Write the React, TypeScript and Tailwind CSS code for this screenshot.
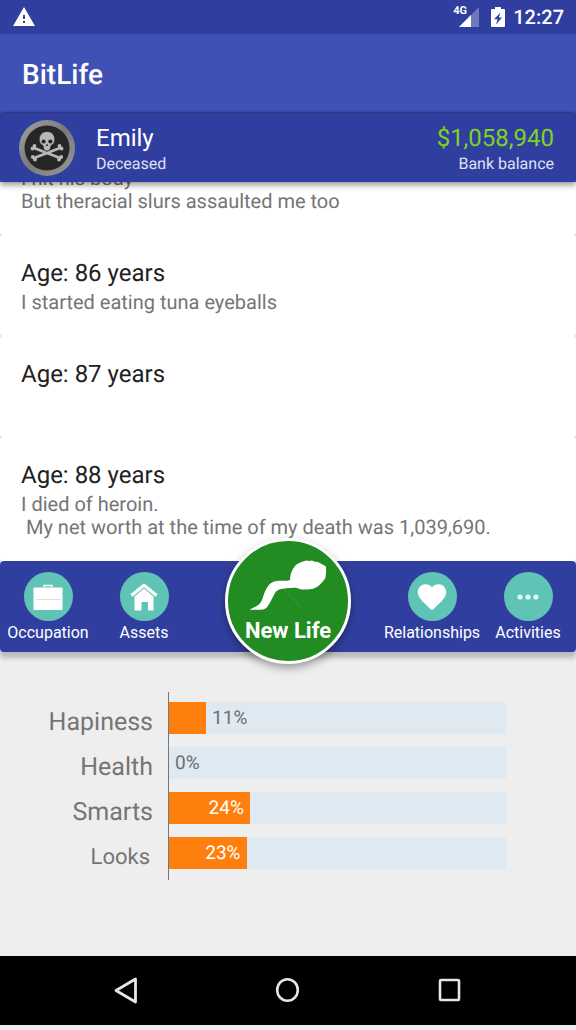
import React from "react";
import { MdWarning, MdFavorite } from "react-icons/md";

interface LifeEntry {
  age?: number;
  events: string[];
}

// The first entry continues above the scroll edge, so it has no heading
const entries: LifeEntry[] = [
  { events: ["I hit his body", "But theracial slurs assaulted me too"] },
  { age: 86, events: ["I started eating tuna eyeballs"] },
  { age: 87, events: [""] },
  { age: 88, events: ["I died of heroin.", " My net worth at the time of my death was 1,039,690."] },
];

const stats = [
  { name: "Hapiness", value: 11, labelClass: "text-[25px]" },
  { name: "Health", value: 0, labelClass: "text-[25px]" },
  { name: "Smarts", value: 24, labelClass: "text-[25px]" },
  { name: "Looks", value: 23, labelClass: "text-[22px] pr-[3px]" },
];

const SkullIcon = () => (
  <svg viewBox="0 0 56 56" className="w-14 h-14 shrink-0" aria-label="Deceased">
    <defs>
      <linearGradient id="ring" x1="0" y1="0" x2="1" y2="1">
        <stop offset="0" stopColor="#a3a3a3" />
        <stop offset="0.5" stopColor="#7a7a7a" />
        <stop offset="1" stopColor="#999999" />
      </linearGradient>
    </defs>
    <circle cx="28" cy="28" r="28" fill="url(#ring)" />
    <circle cx="28" cy="28" r="22.500" fill="#262626" />
    <g stroke="#b8b8b8" strokeWidth="2.600" strokeLinecap="round">
      <path d="M15 28L41 38" />
      <path d="M41 28L15 38" />
    </g>
    <g fill="#b8b8b8">
      <circle cx="13.500" cy="28.500" r="1.900" />
      <circle cx="15.500" cy="26" r="1.900" />
      <circle cx="42.500" cy="28.500" r="1.900" />
      <circle cx="40.500" cy="26" r="1.900" />
      <circle cx="13.800" cy="37" r="1.900" />
      <circle cx="16" cy="39.500" r="1.900" />
      <circle cx="42.200" cy="37" r="1.900" />
      <circle cx="40" cy="39.500" r="1.900" />
    </g>
    <path
      d="M28 11.500c-4.800 0-7.800 3.500-7.800 8 0 2.500.8 4 2 4.900 1 .7 1.900.7 2 2 .2 2.600 1.100 4.600 3.800 4.600s3.600-2 3.800-4.600c.1-1.300 1-1.300 2-2 1.200-.9 2-2.400 2-4.900 0-4.500-3-8-7.800-8z"
      fill="#b8b8b8"
      stroke="#262626"
      strokeWidth="0.800"
    />
    <circle cx="24.600" cy="21.500" r="2.100" fill="#262626" />
    <circle cx="31.400" cy="21.500" r="2.100" fill="#262626" />
    <path d="M28 23.500l-1.200 2.500h2.400z" fill="#262626" />
  </svg>
);

const SignalIcon = () => (
  <svg viewBox="0 0 20 20" className="w-5 h-5" aria-hidden="true">
    <path d="M20 0v20H0z" fill="#7078bd" />
    <path d="M12 8v12H0z" fill="#fff" />
  </svg>
);

const BatteryIcon = () => (
  <svg viewBox="0 0 14 20" className="w-3.5 h-5" aria-hidden="true">
    <path
      fillRule="evenodd"
      d="M4 0h6v2h3a1 1 0 0 1 1 1v16a1 1 0 0 1-1 1H1a1 1 0 0 1-1-1V3a1 1 0 0 1 1-1h3zM9.500 5.500L3 12.200h3.600L5 17.500l6-7H7.800z"
      fill="#fff"
    />
  </svg>
);

const BriefcaseIcon = () => (
  <svg viewBox="0 0 48 48" className="w-12 h-12" aria-hidden="true">
    <path d="M20 14.500v-2h8v2" fill="none" stroke="#fff" strokeWidth="1.300" />
    <rect x="9.500" y="14.500" width="29" height="22.500" rx="0.800" fill="#fff" />
    <path d="M12 26.500h25" stroke="#c5dedb" strokeWidth="0.800" />
  </svg>
);

const HomeIcon = () => (
  <svg viewBox="0 0 48 48" className="w-12 h-12" aria-hidden="true">
    <path d="M11.500 22.500L24 12.300L36.500 22.500" fill="none" stroke="#fff" strokeWidth="3.400" strokeLinejoin="round" />
    <path d="M14.500 23.500L24 15.500l9.500 8V37.500H28v-8.500h-6.500v8.500h-7z" fill="#fff" />
    <path d="M13.500 23.300L24 14.800l10.500 8.500" fill="none" stroke="#7fc9bd" strokeWidth="0.800" />
  </svg>
);

const DotsIcon = () => (
  <svg viewBox="0 0 48 48" className="w-12 h-12" aria-hidden="true">
    <g fill="#d8fbf4">
      <circle cx="16" cy="24" r="2.600" />
      <circle cx="24" cy="24" r="2.600" />
      <circle cx="32" cy="24" r="2.600" />
    </g>
  </svg>
);

const SpermIcon = () => (
  <svg viewBox="-2 -1 90 70" className="w-[90px] h-[70px]" aria-hidden="true">
    <path d="M26 26l30 31" stroke="#3f9a3f" strokeWidth="0.800" />
    <path
      d="M5 59.500C5 58.500 13 57 16 52c2.500-4 3-11 6.500-15 2.500-4 6-6 11.500-6.200 4 0 8 .2 11-.8 0-5 1.500-10 5-14 2-2.500 6-4 9-4.800l2-.8 3 .6 3-.6 2 1 4 .5 3.500 2 4.300 2.300c.6 4 .3 8-.5 12-3 4-6 8-11 10-4 1.500-9 1.500-13 1.200l-4.500-1.500c-4-.4-8 .2-12 .6-4 .4-7.500 1-9.500 4-2.500 4-3.500 7.500-6.500 12-1.500 2.500-3 4.500-5.500 5-4 .3-9 .5-13 .2z"
      fill="#fff"
    />
  </svg>
);

interface TabButtonProps {
  label: string;
  children: React.ReactNode;
}

const TabButton: React.FC<TabButtonProps> = ({ label, children }) => (
  <button className="flex flex-col items-center pt-[11px] text-white">
    <span className="w-[49px] h-[49px] rounded-full bg-[#5fc4b5] flex items-center justify-center">
      {children}
    </span>
    <span className="text-base leading-6">{label}</span>
  </button>
);

export default function App() {
  return (
    <div className="h-screen flex flex-col bg-[#eeeeee] font-[Roboto,sans-serif] [text-rendering:geometricPrecision]">
      <div className="h-[34px] shrink-0 bg-[#303f9f] text-white flex items-center justify-between px-3">
        <MdWarning className="w-6 h-6" />
        <div className="flex items-center">
          <div className="relative mr-3">
            <span className="absolute -left-1.5 -top-1 text-[11px] leading-4 font-bold">4G</span>
            <SignalIcon />
          </div>
          <BatteryIcon />
          <span className="ml-2 text-xl leading-6 font-medium">12:27</span>
        </div>
      </div>

      <header className="h-[79px] shrink-0 bg-[#3f51b5] flex items-center px-[22px] pt-0.5">
        <h1 className="text-[28px] leading-8 font-medium text-white">BitLife</h1>
      </header>

      <div className="bg-[#3f51b5] shrink-0 relative z-10 shadow-[0_3px_6px_rgba(0,0,0,0.4)]">
        <section className="h-[69px] rounded bg-[#303f9f] flex items-center pl-[19px] pr-[22px] text-white shadow-[0_-1px_2px_rgba(0,0,0,0.35)]">
          <SkullIcon />
          <div className="ml-[21px] flex-1 pt-1">
            <p className="text-2xl leading-7">Emily</p>
            <p className="text-base leading-6 text-[#dfe1f1]">Deceased</p>
          </div>
          <div className="text-right pt-1">
            <p className="text-2xl leading-7 text-[#7ed321]">$1,058,940</p>
            <p className="text-base leading-6 text-[#dfe1f1]">Bank balance</p>
          </div>
        </section>
      </div>

      <main className="flex-1 min-h-0 overflow-hidden flex flex-col justify-end bg-[#cccccc]">
        {entries.map((entry, index) => (
          <article key={index} className="shrink-0 rounded-xs bg-white px-[21px] pt-6 pb-[22px]">
            {entry.age && <h2 className="mb-1 text-2xl leading-7 text-[#212121]">Age: {entry.age} years</h2>}
            <div className="text-xl text-[#757575]">
              {entry.events.map((event, i) => (
                <p key={i} className="min-h-[23px] leading-[23px] whitespace-pre">{event}</p>
              ))}
            </div>
          </article>
        ))}
      </main>

      <nav className="relative h-[91px] shrink-0 rounded bg-[#303f9f] grid grid-cols-6 shadow-[0_6px_5px_rgba(0,0,0,0.22)]">
        <TabButton label="Occupation">
          <BriefcaseIcon />
        </TabButton>
        <TabButton label="Assets">
          <HomeIcon />
        </TabButton>
        <div className="col-span-2" />
        <TabButton label="Relationships">
          <MdFavorite className="w-[34px] h-[34px]" />
        </TabButton>
        <TabButton label="Activities">
          <DotsIcon />
        </TabButton>
        <button className="absolute left-1/2 -top-[23px] -translate-x-1/2 w-[126px] h-[126px] rounded-full border-[3px] border-white bg-[#228b22] text-white flex flex-col items-center pt-2 shadow-[0_4px_8px_rgba(0,0,0,0.35)]">
          <SpermIcon />
          <span className="text-[22px] leading-6 font-bold whitespace-nowrap">New Life</span>
        </button>
      </nav>

      <section className="h-[304px] shrink-0 pt-10 pr-[70px] flex items-start">
        <div className="w-[168px] pt-[15px] pr-[15px] flex flex-col gap-[13px] text-right leading-8 text-[#757575]">
          {stats.map((stat) => (
            <p key={stat.name} className={stat.labelClass}>{stat.name}</p>
          ))}
        </div>
        <div className="flex-1 border-l border-[#707880] pt-2.5 pb-[11px] flex flex-col gap-[13px] text-[19px] leading-8">
          {stats.map((stat) => (
            <div key={stat.name} className="h-8 bg-[#dfe9f2] flex">
              <div className="bg-[#ff7f0e] text-right text-white" style={{ width: `${stat.value}%` }}>
                {stat.value > 20 && <span className="pr-1.5">{stat.value}%</span>}
              </div>
              {stat.value <= 20 && <span className="pl-1.5 text-[#6b7075]">{stat.value}%</span>}
            </div>
          ))}
        </div>
      </section>

      <footer className="shrink-0 bg-[#efebf1] pb-[5px]">
        <div className="h-[69px] bg-black grid grid-cols-3 px-[45px] items-center justify-items-center">
          <button aria-label="Back">
            <svg viewBox="0 0 28 28" className="w-7 h-7">
              <path d="M23.500 2v23L4 13.500z" fill="none" stroke="#e6e6e6" strokeWidth="2.800" strokeLinejoin="round" />
            </svg>
          </button>
          <button aria-label="Home">
            <svg viewBox="0 0 28 28" className="w-7 h-7">
              <ellipse cx="13.500" cy="13" rx="10.300" ry="10.800" fill="none" stroke="#e6e6e6" strokeWidth="2.600" />
            </svg>
          </button>
          <button aria-label="Recent apps">
            <svg viewBox="0 0 28 28" className="w-7 h-7">
              <rect x="4" y="3" width="19" height="20" rx="1" fill="none" stroke="#e6e6e6" strokeWidth="2.600" />
            </svg>
          </button>
        </div>
      </footer>
    </div>
  );
}
